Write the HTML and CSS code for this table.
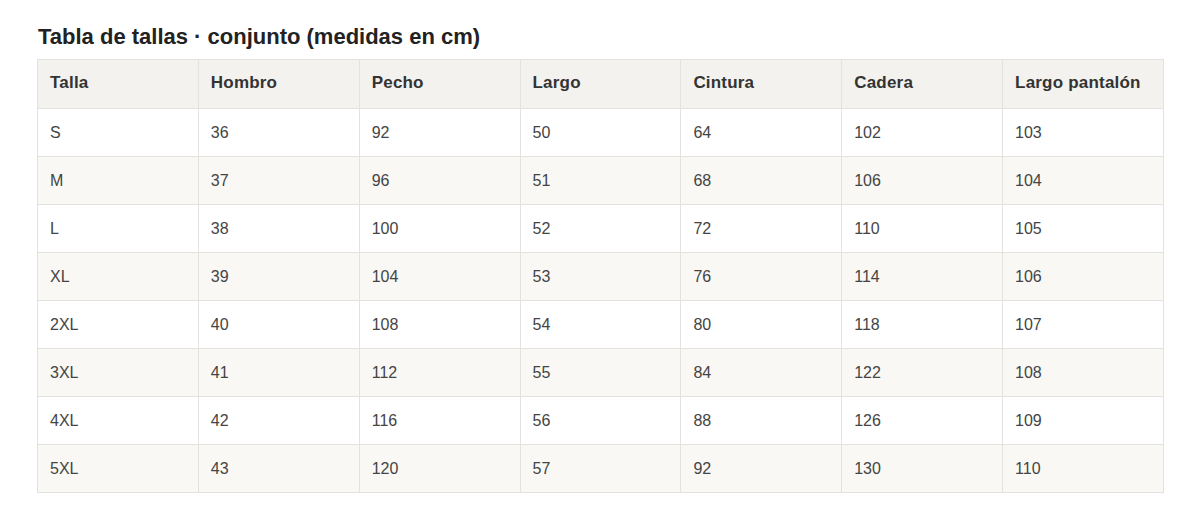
FILE: index.html
```html
<!DOCTYPE html>
<html lang="es">
<head>
<meta charset="utf-8">
<title>Tabla de tallas</title>
<link rel="stylesheet" href="styles.css">
</head>
<body>
<div class="wrap">
<h2 class="title">Tabla de tallas · conjunto (medidas en cm)</h2>
<table class="sizes">
<thead>
<tr><th>Talla</th><th>Hombro</th><th>Pecho</th><th>Largo</th><th>Cintura</th><th>Cadera</th><th>Largo pantalón</th></tr>
</thead>
<tbody>
<tr><td>S</td><td>36</td><td>92</td><td>50</td><td>64</td><td>102</td><td>103</td></tr>
<tr><td>M</td><td>37</td><td>96</td><td>51</td><td>68</td><td>106</td><td>104</td></tr>
<tr><td>L</td><td>38</td><td>100</td><td>52</td><td>72</td><td>110</td><td>105</td></tr>
<tr><td>XL</td><td>39</td><td>104</td><td>53</td><td>76</td><td>114</td><td>106</td></tr>
<tr><td>2XL</td><td>40</td><td>108</td><td>54</td><td>80</td><td>118</td><td>107</td></tr>
<tr><td>3XL</td><td>41</td><td>112</td><td>55</td><td>84</td><td>122</td><td>108</td></tr>
<tr><td>4XL</td><td>42</td><td>116</td><td>56</td><td>88</td><td>126</td><td>109</td></tr>
<tr><td>5XL</td><td>43</td><td>120</td><td>57</td><td>92</td><td>130</td><td>110</td></tr>
</tbody>
</table>
</div>
</body>
</html>
```
FILE: styles.css
```css
html, body {
  margin: 0;
  padding: 0;
  background: #ffffff;
}
body {
  font-family: "Liberation Sans", Arial, sans-serif;
  color: #444;
}
.wrap {
  padding: 24px 36px 0 37px;
}
.title {
  margin: 0 0 9px 1px;
  font-size: 22px;
  line-height: 26px;
  font-weight: bold;
  color: #222;
}
.sizes {
  width: 1127px;
  border-collapse: collapse;
  table-layout: fixed;
  font-size: 16px;
}
.sizes th,
.sizes td {
  border: 1px solid #e4e2dc;
  text-align: left;
  padding: 0 12px;
  line-height: 19px;
}
.sizes th {
  height: 49px;
  padding-bottom: 3px;
  box-sizing: border-box;
  background: #f3f2ee;
  color: #333;
  font-size: 17px;
  letter-spacing: 0.2px;
  font-weight: bold;
}
.sizes td {
  height: 47px;
  color: #444;
}
.sizes tbody tr:nth-child(even) td {
  background: #f9f8f5;
}
```
